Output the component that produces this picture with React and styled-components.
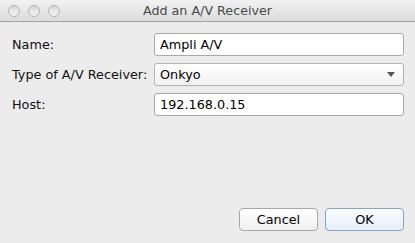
import React from 'react';
import styled, { createGlobalStyle } from 'styled-components';

const Global = createGlobalStyle`
    html, body { margin: 0; padding: 0; background: #ececec; }
    body { font-family: "DejaVu Sans", "Liberation Sans", sans-serif; }
`;

const Window = styled.div`
    width: 415px;
    height: 243px;
    display: flex;
    flex-direction: column;
    background: #ececec;
    overflow: hidden;
`;

const TitleBar = styled.header`
    height: 21px;
    flex: none;
    display: flex;
    align-items: center;
    position: relative;
    background: linear-gradient(#f2f2f2, #dcdcdc);
    border-bottom: 1px solid #a3a3a3;
`;

const Lights = styled.div`
    display: flex;
    gap: 8px;
    padding-left: 8px;
`;

const Light = styled.span`
    width: 10px;
    height: 10px;
    border-radius: 50%;
    border: 1px solid #b5b5b5;
    background: linear-gradient(#d9d9d9, #f4f4f4);
`;

const Title = styled.h1`
    position: absolute;
    left: 0;
    right: 0;
    margin: 0;
    text-align: center;
    font-size: 12.7px;
    font-weight: normal;
    color: #4a4a4a;
    pointer-events: none;
`;

const Body = styled.main`
    flex: 1;
    display: flex;
    flex-direction: column;
    justify-content: space-between;
    padding: 11px 11px 12px 12px;
`;

const Form = styled.div`
    display: grid;
    grid-template-columns: 142px 1fr;
    row-gap: 7px;
    align-items: center;
`;

const Label = styled.label`
    font-size: 12.8px;
    color: #111;
`;

const Field = styled.div`
    height: 21px;
    display: flex;
    align-items: center;
    padding: 0 5px;
    border: 1px solid ${p => (p.$select ? '#b3b3b3' : '#a9a9a9')};
    border-radius: 3px;
    background: ${p => (p.$select ? 'linear-gradient(#ffffff, #f1f1f1)' : '#ffffff')};
    font-size: 12.8px;
    color: #000;
    justify-content: space-between;
`;

const Arrow = styled.span`
    width: 0;
    height: 0;
    margin-right: 3px;
    border-left: 4px solid transparent;
    border-right: 4px solid transparent;
    border-top: 5px solid #555;
`;

const Buttons = styled.div`
    display: flex;
    justify-content: flex-end;
    gap: 7px;
`;

const Button = styled.button`
    width: 79px;
    height: 23px;
    border-radius: 4px;
    font-family: inherit;
    font-size: 12.8px;
    color: #000;
    border: 1px solid ${p => (p.$primary ? '#7fa6d6' : '#a9a9a9')};
    background: ${p => (p.$primary ? 'linear-gradient(#fbfdff, #e6eefa)' : 'linear-gradient(#ffffff, #f0f0f0)')};
`;

export default function App() {
    return (
        <Window>
            <Global />
            <TitleBar>
                <Lights>
                    <Light />
                    <Light />
                    <Light />
                </Lights>
                <Title>Add an A/V Receiver</Title>
            </TitleBar>
            <Body>
                <Form>
                    <Label>Name:</Label>
                    <Field>Ampli A/V</Field>
                    <Label>Type of A/V Receiver:</Label>
                    <Field $select>
                        Onkyo
                        <Arrow />
                    </Field>
                    <Label>Host:</Label>
                    <Field>192.168.0.15</Field>
                </Form>
                <Buttons>
                    <Button>Cancel</Button>
                    <Button $primary>OK</Button>
                </Buttons>
            </Body>
        </Window>
    );
}
